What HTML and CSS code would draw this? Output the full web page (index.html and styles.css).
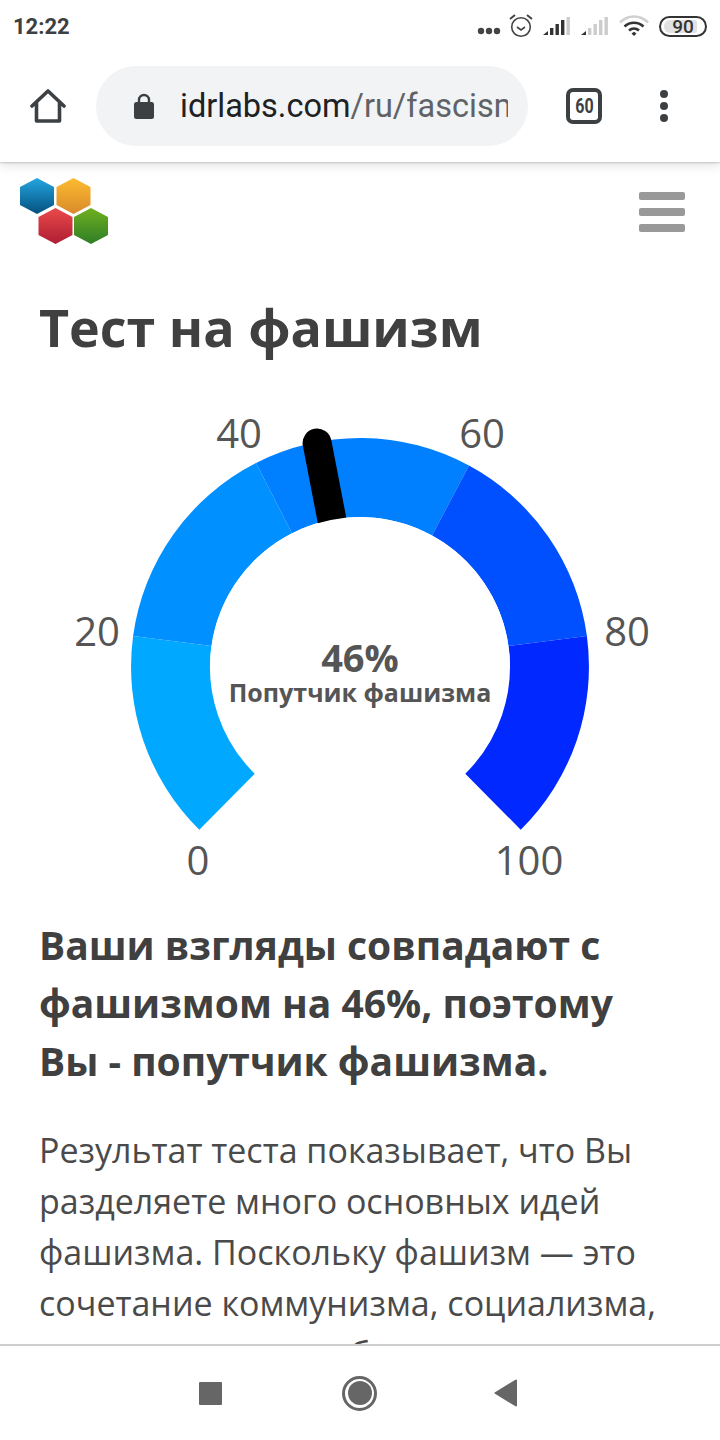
FILE: index.html
```html
<!DOCTYPE html>
<html lang="ru">
<head>
<meta charset="utf-8">
<title>Тест на фашизм</title>
<link rel="stylesheet" href="styles.css">
</head>
<body>
<div class="screen">
  <div class="status">
    <span class="time">12:22</span>
    <div class="status-icons">
      <svg class="ic-dots" width="24" height="8" viewBox="0 0 24 8"><circle cx="4" cy="4" r="3.2"/><circle cx="12" cy="4" r="3.2"/><circle cx="20" cy="4" r="3.2"/></svg>
      <svg class="ic-alarm" width="24" height="24" viewBox="0 0 24 24"><circle cx="12" cy="13" r="9.3" fill="none" stroke="#444" stroke-width="1.6"/><path d="M8 13l4 3 4-3" fill="none" stroke="#444" stroke-width="1.6"/><path d="M1 5l5-4M23 5l-5-4" stroke="#444" stroke-width="2"/></svg>
      <svg width="28" height="20" viewBox="0 0 28 20"><path d="M0 19l5-4v4z" fill="#333"/><rect x="7" y="12" width="3.4" height="7" fill="#333"/><rect x="12.5" y="8" width="3.4" height="11" fill="#333"/><rect x="18" y="4" width="3.4" height="15" fill="#333"/><rect x="23.5" y="1" width="3.4" height="18" fill="#ccc"/></svg>
      <svg width="28" height="20" viewBox="0 0 28 20"><path d="M0 19l5-4v4z" fill="#333"/><rect x="7" y="12" width="3.4" height="7" fill="#ccc"/><rect x="12.5" y="8" width="3.4" height="11" fill="#ccc"/><rect x="18" y="4" width="3.4" height="15" fill="#ccc"/><rect x="23.5" y="1" width="3.4" height="18" fill="#ccc"/></svg>
      <svg width="30" height="22" viewBox="0 0 30 22"><path d="M1 7.5C9-.5 21-.5 29 7.5" fill="none" stroke="#d0d0d0" stroke-width="2.6"/><path d="M5.5 11.5C11 6.5 19 6.5 24.5 11.5" fill="none" stroke="#333" stroke-width="2.6"/><path d="M10 15.5c3-2.6 7-2.6 10 0" fill="none" stroke="#333" stroke-width="2.6"/><path d="M12.5 18.5l2.5-1.8 2.5 1.8-2.5 2.5z" fill="#333"/></svg>
      <div class="battery"><span class="battery-fill"></span><span class="battery-num">90</span></div>
    </div>
  </div>

  <div class="toolbar">
    <svg class="ic-home" width="36" height="36" viewBox="0 0 36 36"><path d="M2 18L18 3l16 15M6.500 14.500V33h23V14.500" fill="none" stroke="#3c4043" stroke-width="3.600" stroke-linejoin="round" stroke-linecap="round"/></svg>
    <div class="omnibox">
      <svg class="ic-lock" width="20" height="26" viewBox="0 0 20 26"><path d="M5 11V7a5 5 0 0 1 10 0v4" fill="none" stroke="#3c4043" stroke-width="2.400"/><rect y="9" width="20" height="17" rx="2.500" fill="#3c4043"/></svg>
      <div class="url"><span class="url-host">idrlabs.com</span><span class="url-path">/ru/fascism/results</span></div>
    </div>
    <div class="tabs"><span class="tabs-num">60</span></div>
    <svg class="ic-menu" width="10" height="34" viewBox="0 0 10 34"><circle cx="5" cy="5" r="4" fill="#3c4043"/><circle cx="5" cy="17" r="4" fill="#3c4043"/><circle cx="5" cy="29" r="4" fill="#3c4043"/></svg>
  </div>

  <main class="page">
    <header class="site-head">
      <svg width="90" height="68" viewBox="0 0 90 68">
        <defs>
          <linearGradient id="gb" x1="0" y1="0" x2="0" y2="1"><stop offset="0" stop-color="#25a6e0"/><stop offset="1" stop-color="#04507f"/></linearGradient>
          <linearGradient id="go" x1="0" y1="0" x2="0" y2="1"><stop offset="0" stop-color="#fcbc30"/><stop offset="1" stop-color="#d98a2b"/></linearGradient>
          <linearGradient id="gr" x1="0" y1="0" x2="0" y2="1"><stop offset="0" stop-color="#ea4a4a"/><stop offset="1" stop-color="#ae1e33"/></linearGradient>
          <linearGradient id="gg" x1="0" y1="0" x2="0" y2="1"><stop offset="0" stop-color="#6fb01f"/><stop offset="1" stop-color="#2f7d27"/></linearGradient>
        </defs>
        <path fill="url(#gb)" d="M17 1l17 9v18l-17 9L0 28V10z"/>
        <path fill="url(#go)" d="M53.500 1l17 9v18l-17 9-17-9V10z"/>
        <path fill="url(#gr)" d="M35.500 31l17 9v18l-17 9-17-9V40z"/>
        <path fill="url(#gg)" d="M71 31l17 9v18l-17 9-17-9V40z"/>
      </svg>
      <div class="burger"><span></span><span></span><span></span></div>
    </header>

    <h1 class="title">Тест на фашизм</h1>

    <svg class="gauge" width="720" height="505" viewBox="0 0 720 505">
      <g transform="translate(360 256)">
        <path fill="#00a8ff" d="M-160.700 162.700A229 229 0 0 1-226.900-31L-148.600-21A150 150 0 0 0-105.300 106.700Z"/>
        <path fill="#0090ff" d="M-226.900-31A229 229 0 0 1-104-204L-68-133.700A150 150 0 0 0-148.600-21Z"/>
        <path fill="#0080ff" d="M-104-204A229 229 0 0 1 109-201.400L72-131.600A150 150 0 0 0-68-133.700Z"/>
        <path fill="#0050ff" d="M109-201.400A229 229 0 0 1 226.900-31L148.500-21A150 150 0 0 0 72-131.600Z"/>
        <path fill="#0028ff" d="M226.900-31A229 229 0 0 1 160.700 162.700L105.300 106.700A150 150 0 0 0 148.500-21Z"/>
        <path d="M-28.100-147.300L-42.900-224" stroke="#000" stroke-width="29" stroke-linecap="round" fill="none"/>
        <path fill="#fff" d="M-150 0A150 150 0 0 1 150 0H0Z"/>
      </g>
      <g class="gauge-scale">
        <text x="198" y="464" text-anchor="middle">0</text>
        <text x="97" y="235" text-anchor="middle">20</text>
        <text x="239" y="37" text-anchor="middle">40</text>
        <text x="482" y="37" text-anchor="middle">60</text>
        <text x="627" y="235" text-anchor="middle">80</text>
        <text x="529" y="464" text-anchor="middle">100</text>
      </g>
      <text class="gauge-value" x="360" y="261" text-anchor="middle">46%</text>
      <text class="gauge-label" x="360" y="291" text-anchor="middle">Попутчик фашизма</text>
    </svg>

    <article class="result">
      <h2 class="lead">Ваши взгляды совпадают с фашизмом на 46%, поэтому Вы - попутчик фашизма.</h2>
      <p class="text">Результат теста показывает, что Вы разделяете много основных идей фашизма. Поскольку фашизм — это сочетание коммунизма, социализма, консерватизма, либерализма</p>
    </article>
  </main>

  <nav class="navbar">
    <span class="nav-square"></span>
    <span class="nav-circle"><span class="nav-dot"></span></span>
    <svg class="nav-back" width="24" height="28" viewBox="0 0 24 28"><path d="M22 1.500V26.500L1.500 14Z" fill="#666" stroke="#666" stroke-width="2" stroke-linejoin="round"/></svg>
  </nav>
</div>
</body>
</html>
```

FILE: styles.css
```css
* { box-sizing: border-box; }
html, body { margin: 0; padding: 0; background: #fff; }
.screen { width: 720px; height: 1440px; display: flex; flex-direction: column; overflow: hidden; font-family: "Open Sans", sans-serif; }

.status { height: 52px; flex: none; display: flex; align-items: center; justify-content: space-between; padding: 0 13px; }
.time { font: 700 22px/1 Roboto, sans-serif; color: #3c4043; margin-top: 1px; }
.status-icons { display: flex; align-items: center; gap: 10px; }
.ic-dots { fill: #444; margin-top: 10px; margin-right: -2px; }
.ic-alarm { margin-top: -1px; }
.battery { position: relative; width: 48px; height: 21px; border: 2px solid #333; border-radius: 11px; display: flex; align-items: center; justify-content: center; }
.battery-fill { position: absolute; left: 3px; top: 2px; bottom: 2px; width: 33px; background: #e2e2e2; border-radius: 6px 2px 2px 6px; }
.battery-num { position: relative; font: 500 19px/1 Roboto, sans-serif; color: #333; }

.toolbar { position: relative; z-index: 2; height: 110px; flex: none; display: flex; align-items: center; padding: 0 0 2px 30px; background: #fff; box-shadow: 0 1px 2px rgba(0,0,0,.18), 0 4px 10px rgba(0,0,0,.1); clip-path: inset(0 0 -20px 0); }
.ic-home { flex: none; }
.omnibox { width: 432px; height: 80px; margin-left: 30px; flex: none; display: flex; align-items: center; padding: 0 20px 0 38px; background: #f1f3f4; border-radius: 40px; overflow: hidden; }
.ic-lock { flex: none; margin-right: 26px; }
.url { font: 400 32.500px/1.2 Roboto, sans-serif; white-space: nowrap; overflow: hidden; flex: 1; min-width: 0; }
.url-host { color: #202124; }
.url-path { color: #5f6368; }
.tabs { width: 36px; height: 36px; margin-left: 38px; flex: none; border: 4px solid #3c4043; border-radius: 7px; display: flex; align-items: center; justify-content: center; font: 700 20px/1 Roboto, sans-serif; color: #3c4043; }
.tabs-num { display: block; transform: scaleX(.8); }
.ic-menu { margin-left: 57px; flex: none; }

.page { flex: 1; min-height: 0; overflow: hidden; }
.site-head { display: flex; justify-content: space-between; align-items: flex-start; padding: 15px 35px 0 20px; height: 114px; }
.burger { display: flex; flex-direction: column; gap: 8px; padding-top: 15px; }
.burger span { display: block; width: 46px; height: 8px; background: #999; border-radius: 2px; }

.title { margin: 21px 0 0; padding-left: 39px; font: 700 52px/60px "Open Sans", sans-serif; color: #404040; }
.gauge { display: block; margin-top: 54px; }
.gauge-scale text { font: 400 40px "Open Sans", sans-serif; fill: #555; }
.gauge-value { font: 700 38px "Open Sans", sans-serif; fill: #555; }
.gauge-label { font: 700 25px "Open Sans", sans-serif; fill: #555; }

.result { padding: 0 39px; }
.lead { margin: 0; font: 700 39px/58px "Open Sans", sans-serif; color: #404040; }
.text { margin: 35px 0 0; font: 400 34px/51px "Open Sans", sans-serif; color: #4a4a4a; }

.navbar { position: relative; height: 96px; flex: none; display: flex; align-items: center; justify-content: center; gap: 120px; padding-right: 3px; background: #fff; border-top: 2px solid #cfcfcf; }
.nav-square { width: 23px; height: 23px; background: #666; border-radius: 1px; }
.nav-circle { width: 35px; height: 35px; border: 3px solid #666; border-radius: 50%; display: flex; align-items: center; justify-content: center; }
.nav-dot { width: 24px; height: 24px; background: #666; border-radius: 50%; }
.nav-back { margin-left: -3px; }
```
